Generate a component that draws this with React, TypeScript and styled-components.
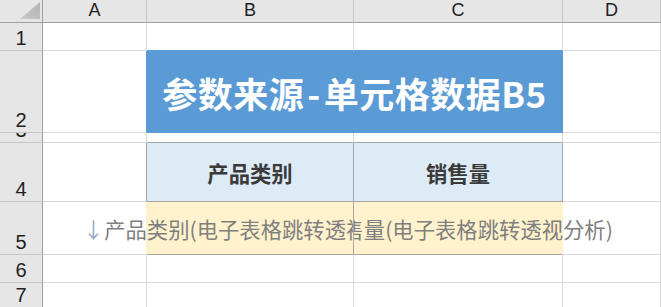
import styled, { createGlobalStyle } from 'styled-components';

const GlobalStyle = createGlobalStyle`
  html, body {
    margin: 0;
    padding: 0;
    background: #ffffff;
  }
  body {
    font-family: "Noto Sans CJK SC", "Liberation Sans", sans-serif;
    overflow: hidden;
  }
`;

const GRID = '#d9d9d9';
const EDGE = '#a6a6a6';
const HEAD_BG = '#e6e6e6';
const HEAD_LINE = '#9e9e9e';
const HEAD_SEP = '#c6c6c6';
const BLUE = '#5b9bd5';
const PALE_BLUE = '#ddebf7';
const PALE_YELLOW = '#fff2cc';

const COLUMNS = ['A', 'B', 'C', 'D'];

const Sheet = styled.div`
  display: grid;
  grid-template-columns: 43px 104px 207px 209px 98px;
  grid-template-rows: 23px 28px 82px 10px 59px 53px 28px 25px;
  width: 661px;
  height: 307px;
  overflow: hidden;
`;

const Corner = styled.div`
  box-sizing: border-box;
  background: ${HEAD_BG};
  border-right: 1px solid ${HEAD_LINE};
  border-bottom: 1px solid ${HEAD_LINE};
  display: flex;
  align-items: flex-end;
  justify-content: flex-end;
  padding: 0 2px 3px 0;
`;

const ColHeader = styled.div`
  box-sizing: border-box;
  background: ${HEAD_BG};
  border-right: 1px solid ${HEAD_SEP};
  border-bottom: 1px solid ${HEAD_LINE};
  font-family: "Liberation Sans", sans-serif;
  font-size: 18px;
  line-height: 20px;
  color: #1f1f1f;
  text-align: center;
`;

const RowHeader = styled.div`
  box-sizing: border-box;
  background: ${HEAD_BG};
  border-right: 1px solid ${HEAD_LINE};
  border-bottom: 1px solid ${HEAD_SEP};
  font-family: "Liberation Sans", sans-serif;
  font-size: 20px;
  line-height: 23px;
  color: #1f1f1f;
  display: flex;
  align-items: flex-end;
  justify-content: center;
  overflow: hidden;
`;

type CellProps = {
  $bg?: string;
  $right?: string;
  $bottom?: string;
  $span?: number;
};

const Cell = styled.div<CellProps>`
  box-sizing: border-box;
  min-width: 0;
  grid-column: span ${p => p.$span ?? 1};
  background: ${p => p.$bg ?? 'transparent'};
  border-right: 1px solid ${p => p.$right ?? GRID};
  border-bottom: 1px solid ${p => p.$bottom ?? GRID};
  display: flex;
  align-items: center;
  justify-content: center;
  white-space: nowrap;
`;

const Title = styled.span`
  font-size: 35px;
  font-weight: 700;
  letter-spacing: 0.5px;
  color: #ffffff;
  line-height: 1;
  margin-top: 2px;
`;

const Dash = styled.span`
  margin: 0 3px;
`;

const FieldName = styled.span`
  font-size: 21.33px;
  font-weight: 700;
  color: #3a3a3a;
  line-height: 1;
  margin-top: 2px;
`;

// text spilling out of its cell: open on one side, cut on the other
const Spill = styled.div<{ $open: 'left' | 'right' }>`
  width: 100%;
  height: 100%;
  display: flex;
  align-items: center;
  justify-content: center;
  clip-path: ${p => (p.$open === 'left' ? 'inset(0 0 0 -400px)' : 'inset(0 -400px 0 0)')};
`;

const Formula = styled.span<{ $shift?: number }>`
  font-size: 21.33px;
  color: #7f7f7f;
  line-height: 1;
  margin-top: 2px;
  transform: translateX(${p => p.$shift ?? 0}px);
`;

const Arrow = styled.span`
  color: #95abc6;
`;

function CornerMark() {
  return (
    <svg width="20" height="17" viewBox="0 0 20 17">
      <defs>
        <linearGradient id="cornerFill" x1="0" y1="1" x2="1" y2="0">
          <stop offset="0" stopColor="#c9c9c9" />
          <stop offset="1" stopColor="#b3b3b3" />
        </linearGradient>
      </defs>
      <polygon points="20,0 20,17 0,17" fill="url(#cornerFill)" />
    </svg>
  );
}

export default function App() {
  return (
    <>
      <GlobalStyle />
      <Sheet>
        <Corner>
          <CornerMark />
        </Corner>
        {COLUMNS.map(c => (
          <ColHeader key={c}>{c}</ColHeader>
        ))}

        {/* row 1 */}
        <RowHeader>1</RowHeader>
        <Cell />
        <Cell $bottom={BLUE} />
        <Cell $bottom={BLUE} />
        <Cell />

        {/* row 2 */}
        <RowHeader>2</RowHeader>
        <Cell $right={BLUE} />
        <Cell $span={2} $bg={BLUE} $right={BLUE} $bottom={BLUE}>
          <Title>
            参数来源<Dash>-</Dash>单元格数据B5
          </Title>
        </Cell>
        <Cell />

        {/* row 3 */}
        <RowHeader>3</RowHeader>
        <Cell />
        <Cell $bottom={EDGE} />
        <Cell $bottom={EDGE} />
        <Cell />

        {/* row 4 */}
        <RowHeader>4</RowHeader>
        <Cell $right={EDGE} />
        <Cell $bg={PALE_BLUE} $right={EDGE} $bottom={EDGE}>
          <FieldName>产品类别</FieldName>
        </Cell>
        <Cell $bg={PALE_BLUE} $right={EDGE} $bottom={EDGE}>
          <FieldName>销售量</FieldName>
        </Cell>
        <Cell />

        {/* row 5 */}
        <RowHeader>5</RowHeader>
        <Cell $right={PALE_YELLOW} />
        <Cell $bg={PALE_YELLOW} $right={EDGE} $bottom={EDGE}>
          <Spill $open="left">
            <Formula>
              <Arrow>↓</Arrow>产品类别(电子表格跳转透视分析)
            </Formula>
          </Spill>
        </Cell>
        <Cell $bg={PALE_YELLOW} $right={PALE_YELLOW} $bottom={EDGE}>
          <Spill $open="right">
            <Formula $shift={9}>销售量(电子表格跳转透视分析)</Formula>
          </Spill>
        </Cell>
        <Cell />

        {/* row 6 */}
        <RowHeader>6</RowHeader>
        <Cell />
        <Cell />
        <Cell />
        <Cell />

        {/* row 7 */}
        <RowHeader>7</RowHeader>
        <Cell />
        <Cell />
        <Cell />
        <Cell />
      </Sheet>
    </>
  );
}
